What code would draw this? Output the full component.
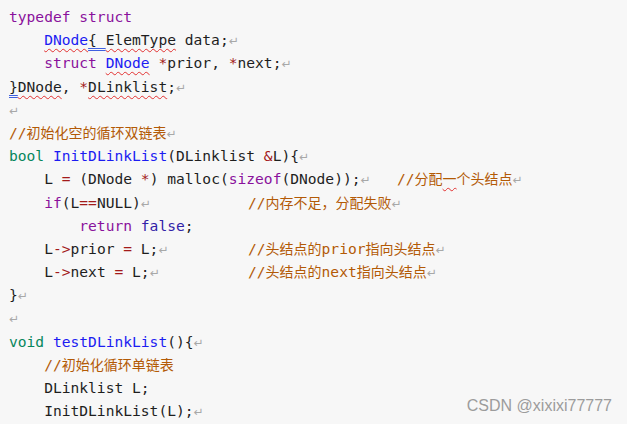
import React from "react";

const Kw = ({ children }: { children: React.ReactNode }) => (
  <span className="text-[#8a119c]">{children}</span>
);
const Ty = ({ children }: { children: React.ReactNode }) => (
  <span className="text-[#06865c]">{children}</span>
);
const Fn = ({ children }: { children: React.ReactNode }) => (
  <span className="text-[#1c1cf2]">{children}</span>
);
const Op = ({ children }: { children: React.ReactNode }) => (
  <span className="text-[#a31a1a]">{children}</span>
);
const Cm = ({ children }: { children: React.ReactNode }) => (
  <span className="text-[#b35a06]">{children}</span>
);
const Zh = ({ children }: { children: React.ReactNode }) => (
  <span className="text-[14px] font-['Noto_Sans_CJK_SC',sans-serif]">{children}</span>
);
const Wavy = ({ children }: { children: React.ReactNode }) => (
  <span className="underline decoration-wavy decoration-[#e23030] decoration-1 underline-offset-[3px]">
    {children}
  </span>
);
const Dbl = ({ children }: { children: React.ReactNode }) => (
  <span className="underline decoration-double decoration-[#3f5fe0] decoration-1 underline-offset-[3px]">
    {children}
  </span>
);
const Mark = () => <span className="text-[12px] text-[#a8a8a8] font-['DejaVu_Sans',sans-serif]">↵</span>;

const Line = ({ children }: { children?: React.ReactNode }) => (
  <div className="h-[23.2px] whitespace-pre">{children}</div>
);

export default function App() {
  return (
    <div className="relative w-[627px] h-[424px] overflow-hidden bg-[#f7f7f7]">
      <div className="pl-[9px] pt-[5px] text-[14.6px] leading-[23.2px] text-[#1e1e1e] font-['DejaVu_Sans_Mono','Noto_Sans_CJK_SC',monospace]">
        <Line>
          <Kw>typedef struct</Kw>
        </Line>
        <Line>
          {"    "}
          <Fn>
            <Wavy>DNode</Wavy>
          </Fn>
          <Dbl>{"{ "}</Dbl>
          <Wavy>ElemType</Wavy>
          {" data;"}
          <Mark />
        </Line>
        <Line>
          {"    "}
          <Kw>struct</Kw> <Fn><Wavy>DNode</Wavy></Fn> <Op>*</Op>prior, <Op>*</Op>next;
          <Mark />
        </Line>
        <Line>
          <Dbl>{"}"}</Dbl>
          <Wavy>DNode</Wavy>, <Op>*</Op>
          <Wavy>DLinklist</Wavy>;
          <Mark />
        </Line>
        <Line>
          <Mark />
        </Line>
        <Line>
          <Cm>
            //<Zh>初始化空的循环双链表</Zh>
          </Cm>
          <Mark />
        </Line>
        <Line>
          <Ty>bool</Ty> <Fn>InitDLinkList</Fn>(DLinklist <Op>&amp;</Op>L){"{"}
          <Mark />
        </Line>
        <Line>
          <span className="inline-block w-[388px]">
            {"    "}L <Op>=</Op> (DNode <Op>*</Op>) malloc(<Kw>sizeof</Kw>(DNode));
            <Mark />
          </span>
          <Cm>
            //<Zh>分配<Wavy>一</Wavy>个头结点</Zh>
          </Cm>
          <Mark />
        </Line>
        <Line>
          <span className="inline-block w-[239px]">
            {"    "}
            <Kw>if</Kw>(L<Op>==</Op>NULL)
            <Mark />
          </span>
          <Cm>
            //<Zh>内存不足，分配失败</Zh>
          </Cm>
          <Mark />
        </Line>
        <Line>
          {"        "}
          <Kw>return</Kw> <span className="text-[#3222a8]">false</span>;
        </Line>
        <Line>
          <span className="inline-block w-[239px]">
            {"    "}L<Op>-&gt;</Op>prior <Op>=</Op> L;
            <Mark />
          </span>
          <Cm>
            //<Zh>头结点的</Zh>prior<Zh>指向头结点</Zh>
          </Cm>
          <Mark />
        </Line>
        <Line>
          <span className="inline-block w-[239px]">
            {"    "}L<Op>-&gt;</Op>next <Op>=</Op> L;
            <Mark />
          </span>
          <Cm>
            //<Zh>头结点的</Zh>next<Zh>指向头结点</Zh>
          </Cm>
          <Mark />
        </Line>
        <Line>
          {"}"}
          <Mark />
        </Line>
        <Line>
          <Mark />
        </Line>
        <Line>
          <Ty>void</Ty> <Fn>testDLinkList</Fn>(){"{"}
          <Mark />
        </Line>
        <Line>
          {"    "}
          <Cm>
            //<Zh>初始化循环单链表</Zh>
          </Cm>
        </Line>
        <Line>{"    "}DLinklist L;</Line>
        <Line>
          {"    "}InitDLinkList(L);
          <Mark />
        </Line>
      </div>
      <div className="absolute right-[15px] bottom-[6px] text-[16px] text-[#9c9c9c] font-['Liberation_Sans',Arial,sans-serif]">
        CSDN @xixixi77777
      </div>
    </div>
  );
}
